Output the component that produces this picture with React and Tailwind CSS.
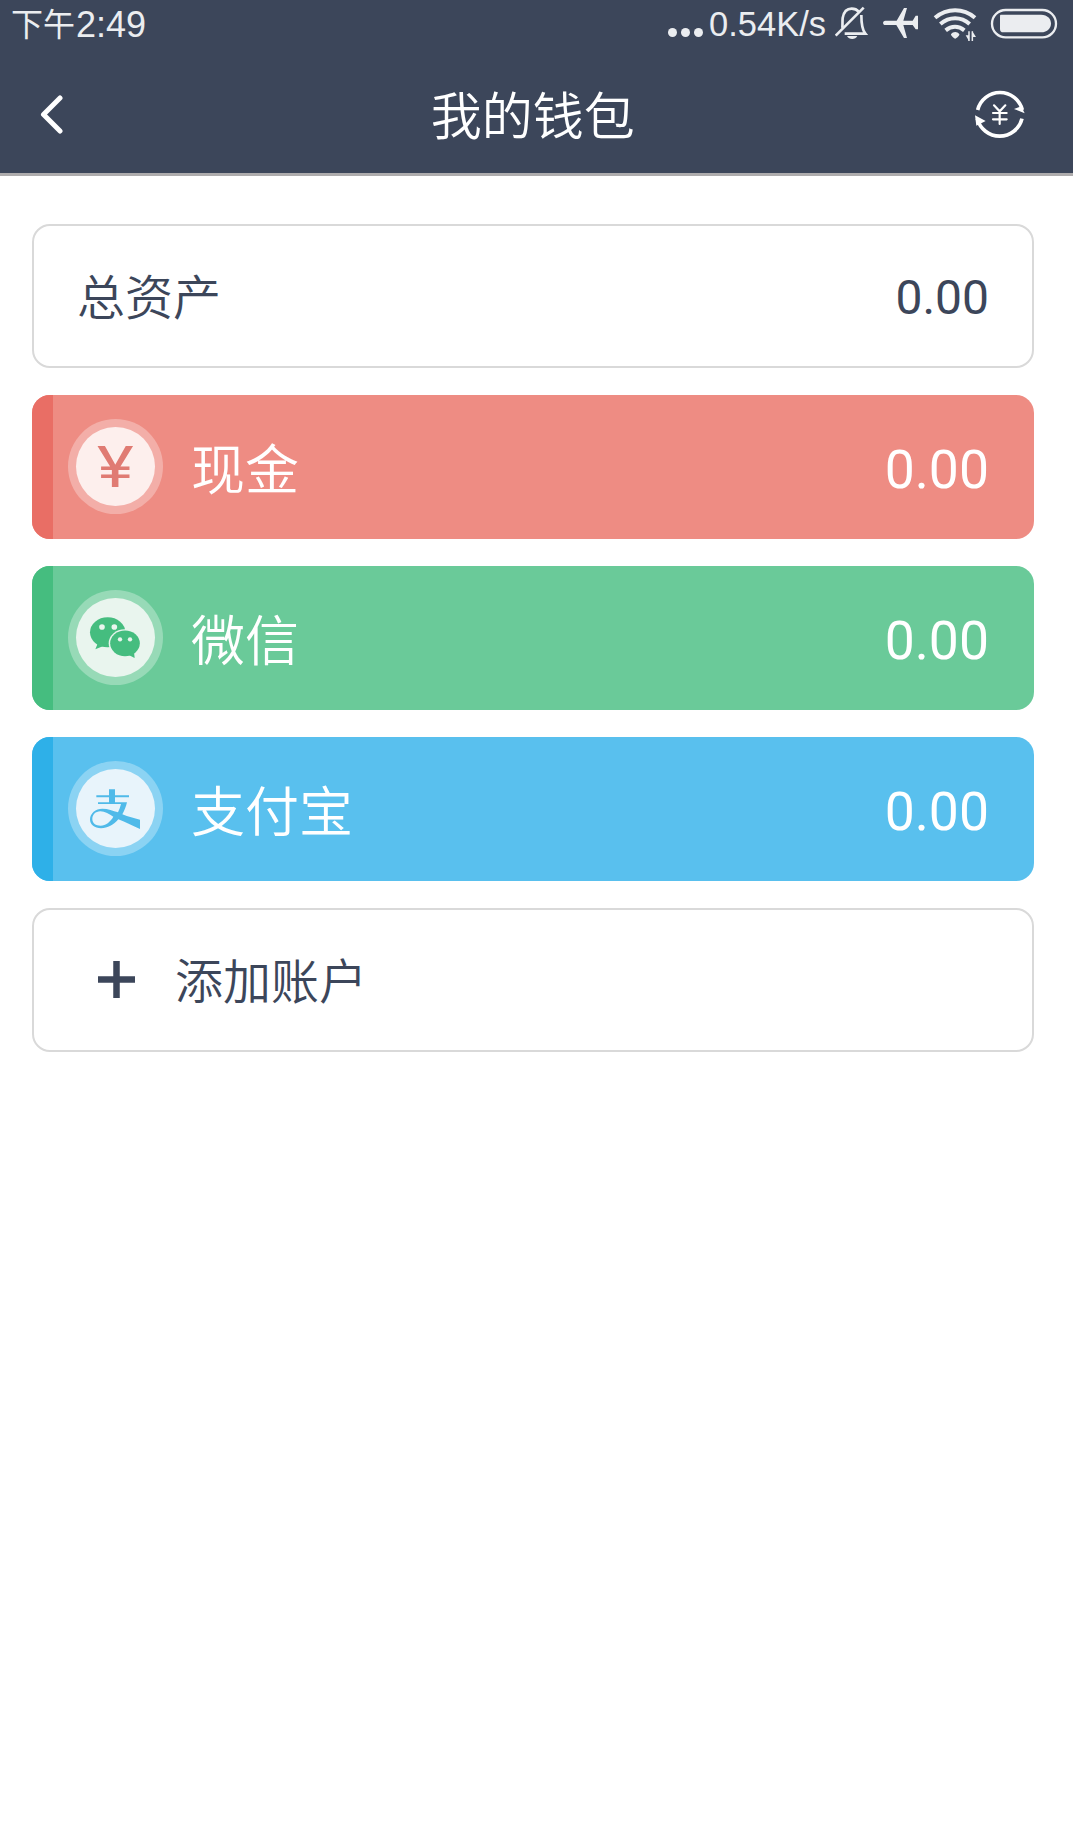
const accounts = [
  { name: "现金", amount: "0.00", bg: "bg-[#ee8c83]", strip: "bg-[#e96e65]", inner: "bg-[#fdefed]", icon: <CashIcon /> },
  { name: "微信", amount: "0.00", bg: "bg-[#6aca99]", strip: "bg-[#45bd7f]", inner: "bg-[#e9f5ee]", icon: <WechatIcon /> },
  { name: "支付宝", amount: "0.00", bg: "bg-[#59c0ee]", strip: "bg-[#2eb0e8]", inner: "bg-[#e8f4fb]", icon: <AlipayIcon /> },
];

function CashIcon() {
  return <span className="scale-x-120 text-[58px] leading-none text-[#e07b73]">¥</span>;
}

function WechatIcon() {
  return (
    <svg viewBox="0 0 237 237" className="size-[79px]">
      <g fill="#45bd7f">
        <ellipse cx="95" cy="103" rx="53" ry="45" />
        <path d="M67 132 L58 154 L88 142 Z" />
        <ellipse cx="146" cy="136" rx="48" ry="42" fill="#e9f5ee" />
        <ellipse cx="147" cy="136" rx="44.500" ry="38.500" />
        <path d="M158 171 L176 180 L174 162 Z" />
      </g>
      <g fill="#e9f5ee">
        <circle cx="78" cy="87" r="8.500" />
        <circle cx="115" cy="87" r="8.500" />
        <circle cx="132" cy="124" r="6.500" />
        <circle cx="162" cy="124" r="6.500" />
      </g>
    </svg>
  );
}

function AlipayIcon() {
  return (
    <svg viewBox="0 0 237 237" className="size-[79px]">
      <g fill="#4fbae9">
        <path d="M99 61h18v42h-18z" />
        <path d="M61 79h98v6h-98z" />
        <path d="M66 100h87c-3 13-8 25-14 36 18 7 35 12 53 16v28c-22-9-43-20-65-29-14 16-32 27-52 27-19 0-33-11-33-27 0-18 17-32 37-32 17 0 32 6 47 11 4-8 7-16 9-25h-69zM112 143c-12-8-25-16-39-16-15 0-24 11-24 23 0 13 10 20 25 20 15-1 29-11 38-27z" fillRule="evenodd" />
      </g>
    </svg>
  );
}

function StatusIcons() {
  return (
    <svg viewBox="555 0 675 180" className="h-[60px] w-[225px]" fill="none" stroke="#ebedf0" strokeWidth="8">
      {/* muted bell */}
      <path d="M577 84c1-10 0-20 1-30 3-17 12-28 27-28 9 0 16 3 21 9M634 45c0 28 2 44 12 56h-62" />
      <path d="M557 107L641 23" />
      <path d="M591 108h31c-5 12-26 12-31 0z" fill="#ebedf0" stroke="none" />
      {/* airplane */}
      <path
        d="M706 62h34l22-38h9l-11 38h28l9-15h7v41h-7l-9-13h-28l11 39h-9l-23-39h-33c-9 0-9-13 0-13z"
        fill="#ebedf0"
        stroke="none"
      />
      {/* wifi */}
      <path d="M855 53c36-30 85-30 120 0" strokeWidth="12" />
      <path d="M871 72c27-23 62-23 88 0" strokeWidth="12" />
      <path d="M887 91c17-14 39-14 56 0" strokeWidth="12" />
      <path d="M903 103c6-9 19-9 25 0 2 3-9 13-12.500 13s-14-10-12.500-13z" fill="#ebedf0" stroke="none" />
      <path d="M957 94v29M967 94v29" strokeWidth="4.500" />
      <path d="M957 123v-17h-10zM967 94v17h11z" fill="#ebedf0" stroke="none" />
      {/* battery */}
      <rect x="1026" y="30" width="192" height="82" rx="41" strokeWidth="7" />
      <path d="M1052 44h121c40 0 40 53 0 53h-113c-7 0-10-3-10-10v-33c0-7 0-10 2-10z" fill="#ebedf0" stroke="none" />
    </svg>
  );
}

function StatusBar() {
  return (
    <div className="flex h-[60px] items-start justify-between pl-[11px] text-[#ebedf0]">
      <div className="flex h-[50px] items-center leading-none">
        <span className="text-[32px]">下午</span>
        <span className="ml-px font-['Liberation_Sans',sans-serif] text-[36px]">2:49</span>
      </div>
      <div className="flex items-start">
        <div className="mt-[28px] mr-[6px] flex gap-[4px]">
          <span className="size-[9px] rounded-full bg-[#ebedf0]" />
          <span className="size-[9px] rounded-full bg-[#ebedf0]" />
          <span className="size-[9px] rounded-full bg-[#ebedf0]" />
        </div>
        <span className="mr-[9px] flex h-[49px] items-center font-['Liberation_Sans',sans-serif] text-[34.500px] leading-none">
          0.54K/s
        </span>
        <div className="mr-[13px]">
          <StatusIcons />
        </div>
      </div>
    </div>
  );
}

function BackIcon() {
  return (
    <svg viewBox="0 0 24 40" className="h-[40px] w-[24px]" fill="none" stroke="#fff" strokeWidth="5" strokeLinecap="round" strokeLinejoin="round">
      <path d="M21 3L4.500 19.500L21 36" />
    </svg>
  );
}

function ExchangeIcon() {
  return (
    <svg viewBox="160 83 160 160" className="size-[53.333px]" fill="none" stroke="#fff" strokeWidth="11">
      <path d="M174 149A69 69 0 0 1 308 149" />
      <path d="M307 175A69 69 0 0 1 173 175" />
      <path d="M283 146l22-8 10 21zM198 182l-32-17 4 31z" fill="#fff" stroke="none" />
      <path d="M223 135l17 18 17-18M240 153v38M220 158h41M220 177h41" strokeWidth="6.500" strokeLinecap="round" />
    </svg>
  );
}

function AccountCard({ account }) {
  return (
    <div className={`flex h-[144px] overflow-hidden rounded-[18px] text-white ${account.bg}`}>
      <div className={`w-[21px] ${account.strip}`} />
      <div className="flex flex-1 items-center pr-[45px] pl-[15px]">
        <div className="mb-px flex size-[95px] items-center justify-center rounded-full bg-white/30">
          <div className={`flex size-[79px] items-center justify-center rounded-full ${account.inner}`}>
            {account.icon}
          </div>
        </div>
        <span className="mt-[10px] ml-[28px] text-[54px] leading-none font-[350]">{account.name}</span>
        <span className="mt-[5px] ml-auto text-[53.500px] leading-none">{account.amount}</span>
      </div>
    </div>
  );
}

export default function App() {
  return (
    <div className="min-h-[1825px] bg-white font-[Roboto,'Noto_Sans_CJK_SC',sans-serif] text-[#3c465a]">
      <header className="h-[176px] border-b-[3px] border-[#aeacad] bg-[#3c465a]">
        <StatusBar />
        <div className="flex h-[113px] items-center justify-between pr-[47px] pb-[4px] pl-[39px] text-white">
          <BackIcon />
          <h1 className="pt-[6px] pl-[30px] text-[51px] leading-none font-[350]">我的钱包</h1>
          <ExchangeIcon />
        </div>
      </header>

      <main className="flex flex-col gap-[27px] pt-[48px] pr-[39px] pl-[32px]">
        <div className="flex h-[144px] items-center justify-between rounded-[18px] border-2 border-[#d9d9d9] pr-[43px] pl-[43px]">
          <span className="mt-[6px] text-[48px] leading-none font-[350]">总资产</span>
          <span className="mt-[4px] text-[48px] leading-none">0.00</span>
        </div>

        {accounts.map((account) => (
          <AccountCard key={account.name} account={account} />
        ))}

        <div className="flex h-[144px] items-center rounded-[18px] border-2 border-[#d9d9d9] pl-[64px]">
          <svg viewBox="0 0 37 37" className="mb-px size-[37px]" stroke="#3c465a" strokeWidth="6.500">
            <path d="M18.500 0v37M0 18.500h37" />
          </svg>
          <span className="mt-[6px] ml-[40px] text-[48px] leading-none font-[350]">添加账户</span>
        </div>
      </main>
    </div>
  );
}
